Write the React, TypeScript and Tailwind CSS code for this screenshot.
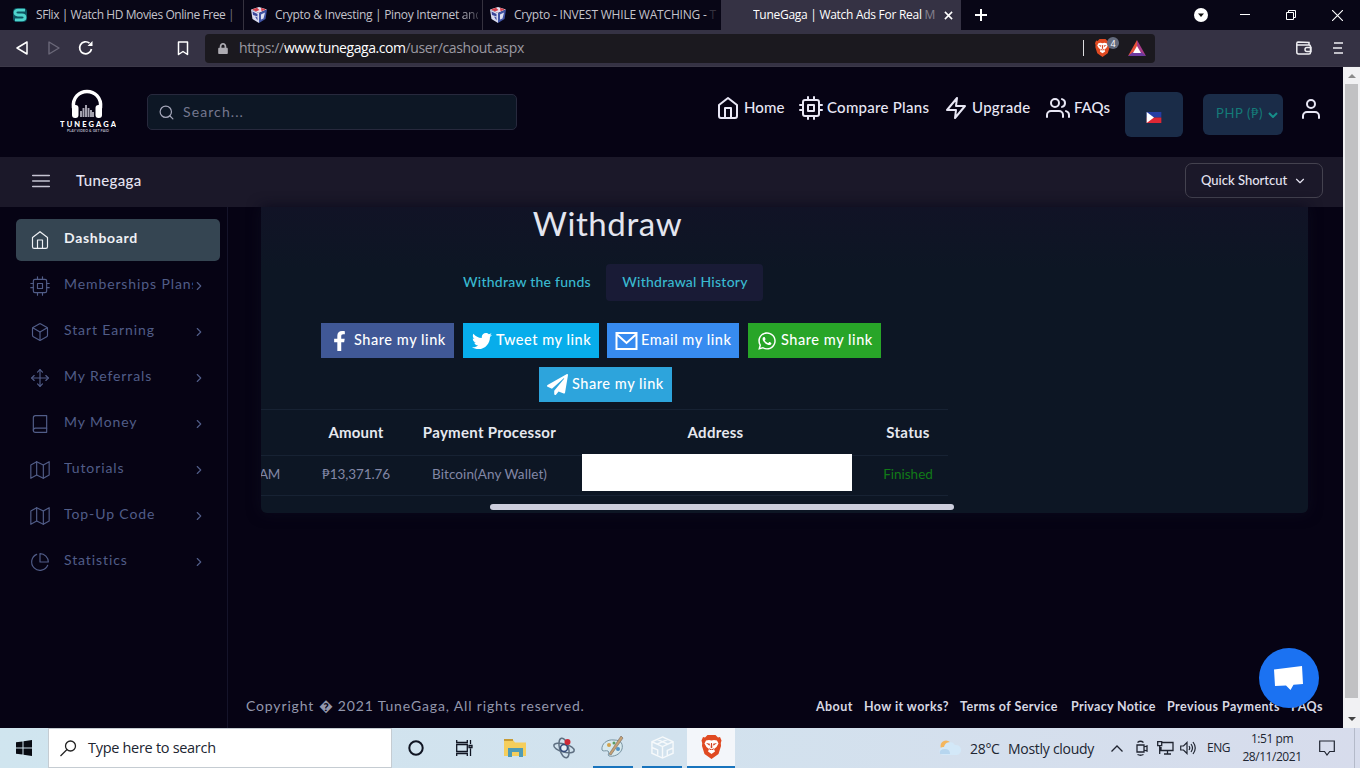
import type { ReactNode } from "react";
import {
    FiHome, FiCpu, FiZap, FiUsers, FiUser, FiBox, FiMove, FiBook, FiMap, FiPieChart,
    FiSearch, FiMenu, FiChevronRight, FiChevronDown,
} from "react-icons/fi";
import { FaFacebookF, FaTwitter, FaWhatsapp, FaPaperPlane, FaLock } from "react-icons/fa";

const menu = [
    { icon: FiCpu, label: "Memberships Plans" },
    { icon: FiBox, label: "Start Earning" },
    { icon: FiMove, label: "My Referrals" },
    { icon: FiBook, label: "My Money" },
    { icon: FiMap, label: "Tutorials" },
    { icon: FiMap, label: "Top-Up Code" },
    { icon: FiPieChart, label: "Statistics" },
];

export default function App() {
    return (
        <div className="flex h-[768px] w-[1360px] flex-col overflow-hidden bg-[#060314] whitespace-nowrap font-['Lato',sans-serif]">
            <TabStrip />
            <Toolbar />
            <div className="flex h-[661px]">
                <div className="relative flex w-[1343px] flex-col">
                    <Header />
                    <SubHeader />
                    <div className="flex flex-1">
                        <Sidebar />
                        <main className="flex flex-1 flex-col">
                            <WithdrawCard />
                            <Footer />
                        </main>
                    </div>
                    <ChatButton />
                </div>
                <Scrollbar />
            </div>
            <Taskbar />
        </div>
    );
}

/* Browser */

function TabStrip() {
    return (
        <div className="flex h-[30px] bg-[#080616] font-['Open_Sans',sans-serif] text-[12px] text-[#c4c3cb]">
            <div className="flex w-[244px] items-center border-r border-[#35323f] pl-[12px]">
                <svg viewBox="0 0 16 16" className="mr-[8px] h-4 w-4">
                    <rect x="1" y="1" width="14" height="14" rx="4" fill="#0d5360" />
                    <path d="M13 3.2H6Q3 3.2 3 5.5T6 8h4q3 0 3 2.4T10 12.8H3" fill="none" stroke="#4fd5cd" strokeWidth="2.8" />
                </svg>
                <span className="w-[203px] overflow-hidden tracking-[-0.42px]">SFlix | Watch HD Movies Online Free <span className="text-[#77747f]">|</span></span>
            </div>
            <div className="flex w-[239px] items-center border-r border-[#35323f] pl-[7px]">
                <CubeLogo />
                <span className="w-[203px] overflow-hidden tracking-[-0.3px]">Crypto &amp; Investing | Pinoy Internet <span className="bg-linear-to-r from-[#c4c3cb] to-[#24222f] bg-clip-text text-transparent">and</span></span>
            </div>
            <div className="flex w-[238px] items-center pl-[7px]">
                <CubeLogo />
                <span className="w-[206px] overflow-hidden tracking-[-0.2px]">Crypto - INVEST WHILE WATCHING - <span className="text-[#35323f]">T</span></span>
            </div>
            <div className="flex w-[240px] items-center bg-[#353244] pl-[32px] font-medium text-white">
                <span className="w-[183px] overflow-hidden tracking-[-0.28px]">TuneGaga | Watch Ads For Real <span className="text-[#85828f]">M</span></span>
                <svg viewBox="0 0 10 10" className="ml-[8px] h-[9px] w-[9px]" stroke="white" strokeWidth="1.7"><path d="M1 1l8 8M9 1L1 9" /></svg>
            </div>
            <div className="flex flex-1 items-center">
                <svg viewBox="0 0 12 12" className="ml-[14px] h-3 w-3" stroke="white" strokeWidth="2"><path d="M6 0v12M0 6h12" /></svg>
                <svg viewBox="0 0 14 14" className="ml-[207px] h-[14px] w-[14px]"><circle cx="7" cy="7" r="7" fill="#fff" /><path d="M4 5.5h6L7 9z" fill="#111" /></svg>
                <svg viewBox="0 0 10 10" className="ml-[32px] h-[10px] w-[10px]" stroke="white"><path d="M0 4.5h10" /></svg>
                <svg viewBox="0 0 10 10" className="ml-[36px] h-[10px] w-[10px]" stroke="white" fill="none"><path d="M.5 2.5h7v7h-7zM2.5 2.5v-2h7v7h-2" /></svg>
                <svg viewBox="0 0 10 10" className="ml-[36px] h-[11px] w-[11px]" stroke="white"><path d="M0 0l10 10M10 0L0 10" /></svg>
            </div>
        </div>
    );
}

function CubeLogo() {
    return (
        <svg viewBox="0 0 16 16" className="mr-[8px] h-4 w-4">
            <path d="M0 2.5L8 0l8 2.5L8 6z" fill="#e8dff0" />
            <path d="M0 2.5L8 6v10L1.5 12z" fill="#d9dcf0" />
            <path d="M16 2.5L8 6v10l6.5-4z" fill="#4154a5" />
            <path d="M1.5 4.5L6.5 7v2.5L2 8zM4 9.5l2.5 1v3z" fill="#3c489a" />
            <path d="M1 2.5L6 .8 8.500 3 5 4.500z" fill="#d6404b" />
            <path d="M10 .8l5 1.700L10.500 4.200z" fill="#d6404b" />
            <path d="M10 7.5l4-2-1.5 6-2.5 1z" fill="#dee1f2" />
        </svg>
    );
}

function Toolbar() {
    return (
        <div className="flex h-[37px] items-center border-b border-[#3c3949] bg-[#353244] font-['Open_Sans',sans-serif]">
            <svg viewBox="0 0 12 14" className="ml-[16px] h-[14px] w-[12px]" fill="none" stroke="white" strokeWidth="1.5" strokeLinejoin="round"><path d="M11 1v12L1 7z" /></svg>
            <svg viewBox="0 0 12 14" className="ml-[20px] h-[14px] w-[12px]" fill="none" stroke="#6b6879" strokeWidth="1.4" strokeLinejoin="round"><path d="M1 1v12l10-6z" /></svg>
            <svg viewBox="0 0 16 16" className="ml-[18px] h-4 w-4" fill="none" stroke="white" strokeWidth="1.7"><path d="M13.5 9A6 6 0 1 1 11.5 3.2" /><path d="M9.5 6h5V1z" fill="white" stroke="none" /></svg>
            <svg viewBox="0 0 12 15" className="ml-[83px] h-[15px] w-[12px]" fill="none" stroke="white" strokeWidth="1.5" strokeLinejoin="round"><path d="M1.5 1h9v12.5L6 10.5l-4.5 3z" /></svg>
            <div className="ml-[16px] flex h-[29px] w-[950px] items-center rounded-[4px] bg-[#1b191f] pl-[13px]">
                <FaLock className="h-[11px] w-[10px] text-[#adabb2]" />
                <span className="ml-[11px] w-[300px] pb-px text-[14px] tracking-[-0.36px] text-[#9b99a2]">
                    https://<span className="font-medium tracking-[-0.45px] text-white">www.tunegaga.com</span>/user/cashout.aspx
                </span>
                <div className="ml-[544px] h-4 w-px bg-[#dcdcdf]" />
                <div className="relative ml-[11px] h-[18px] w-[26px]">
                    <BraveLion className="h-[18px] w-[15px]" />
                    <span className="absolute top-[-2px] left-[12px] flex h-[12px] w-[12px] items-center justify-center rounded-full bg-[#646b7d] text-[9px] leading-none text-white">4</span>
                </div>
                <svg viewBox="0 0 18 16" className="ml-[7px] h-[16px] w-[18px]">
                    <path d="M9 0L0 16l9-5z" fill="#e6513a" />
                    <path d="M9 0l9 16-9-5z" fill="#a73b88" />
                    <path d="M0 16h18l-5-4H5z" fill="#6c3aa0" />
                    <path d="M9 6l-4 7h8z" fill="white" />
                </svg>
            </div>
            <svg viewBox="0 0 16 14" className="ml-[141px] h-[14px] w-[16px]" fill="none" stroke="#eeeef2" strokeWidth="1.5"><path d="M13 4V1.5L2 1Q.8 1 .8 2.5V11Q.8 13 2.5 13H13q1.5 0 1.5-1.5V5.5Q14.5 4 13 4H1.5M15 6.5h-4a2 2 0 0 0 0 4h4z" /></svg>
            <svg viewBox="0 0 10 12" className="ml-[21px] h-[12px] w-[10px]" stroke="#eeeef2" strokeWidth="1.6"><path d="M1 1h9M0 6h9M1 11h9" /></svg>
        </div>
    );
}

function BraveLion({ className }: { className: string }) {
    return (
        <svg viewBox="0 0 20 24" className={className}>
            <path d="M6 0h8l2.5 2.5L18.5 2 20 5.5l-.7 2.5.2 3-2.5 8L10 24l-7-5-2.5-8 .2-3L0 5.500 1.500 2l2 .5z" fill="#e04a22" />
            <path d="M4.5 5.5l3-.5 2.5.6 2.5-.6 3 .5 1.5 3-2 3.5-2.5 2 1 2.5L10 19l-3.5-2.5 1-2.5L5 12 3 8.500z" fill="#fff" />
            <path d="M4.5 8l4 .8-.5 2zM15.5 8l-4 .8.5 2zM9.500 8h1l.4 4.500-.9.700-.9-.700zM7.500 13l2.500 1.400 2.500-1.400-.8 2h-3.400z" fill="#d44322" />
        </svg>
    );
}

function Scrollbar() {
    return (
        <div className="flex w-[17px] flex-col items-center bg-[#f1f1f3]">
            <div className="flex h-[17px] items-center"><svg viewBox="0 0 8 4" className="h-1 w-2" fill="#8b8b8b"><path d="M0 4l4-4 4 4z" /></svg></div>
            <div className="h-[614px] w-[13px] bg-[#c1c1c3]" />
            <div className="mt-[12px] flex h-[17px] items-center"><svg viewBox="0 0 8 4" className="h-1 w-2" fill="#444"><path d="M0 0l4 4 4-4z" /></svg></div>
        </div>
    );
}

/* Site */

function Header() {
    return (
        <header className="flex h-[90px] items-start text-[15px] text-[#e8e7f5]">
            <Logo />
            <div className="mt-[27px] ml-[31px] flex h-[36px] w-[370px] items-center rounded-[5px] border border-[#27293d] bg-[#0d1725] pl-[10px] text-[#75788f]">
                <FiSearch className="h-[17px] w-[17px] text-[#a5a7ba]" strokeWidth={1.7} />
                <span className="ml-[8px] pb-px text-[14px] tracking-[1.1px]">Search...</span>
            </div>
            <nav className="mt-[29px] ml-[199px] flex h-[26px] font-medium">
                <NavLink icon={<FiHome className="h-6 w-6" />} label="Home" className="w-[83px] tracking-[0.1px]" />
                <NavLink icon={<FiCpu className="h-6 w-6" />} label="Compare Plans" className="w-[145px] tracking-[0.27px]" />
                <NavLink icon={<FiZap className="h-6 w-6" />} label="Upgrade" className="w-[102px] tracking-[0.3px]" />
                <NavLink icon={<FiUsers className="h-6 w-6" />} label="FAQs" className="w-[79px] tracking-[0px]" />
            </nav>
            <div className="mt-[25px] flex h-[45px] w-[58px] items-center justify-center rounded-[6px] bg-[#1a2c48] pt-[6px]">
                <svg viewBox="0 0 16 12" className="h-[11px] w-[16px]">
                    <path d="M0 0h16v6H0z" fill="#263ea4" /><path d="M0 6h16v6H0z" fill="#df2734" /><path d="M0 0l8 6-8 6z" fill="#fff" />
                </svg>
            </div>
            <div className="mt-[27px] ml-[20px] flex h-[41px] w-[80px] items-center rounded-[6px] bg-[#1a2c48] pl-[13px] text-[13px] tracking-[0.6px] text-[#147b78]">
                <span className="w-[52px] pb-px">PHP (₱)</span>
                <svg viewBox="0 0 10 6" className="h-[6px] w-[10px]" fill="none" stroke="#168e89" strokeWidth="2"><path d="M1 1l4 4 4-4" /></svg>
            </div>
            <FiUser className="mt-[30px] ml-[16px] h-6 w-6" />
        </header>
    );
}

function NavLink({ icon, label, className }: { icon: ReactNode, label: string, className: string }) {
    return (
        <a className={`flex items-start gap-[4px] ${className}`}>
            {icon}
            <span className="leading-[22px]">{label}</span>
        </a>
    );
}

function Logo() {
    return (
        <svg viewBox="0 0 56 44" className="mt-[22px] ml-[60px] h-[44px] w-[56px]">
            <path d="M13.5 19C11-3 43-3 40.5 19" fill="none" stroke="#fff" strokeWidth="3.5" />
            <rect x="12" y="16" width="6.5" height="13" rx="3" fill="#fff" />
            <rect x="35.5" y="16" width="6.5" height="13" rx="3" fill="#fff" />
            <path d="M21 28v-6M23.5 28v-9M26 28V16M28.5 28V19M31 28v-7M33 28v-5" stroke="#aaa8b5" strokeWidth="1.9" />
            <text x="0" y="37.5" textLength="56" fontSize="7.5" fontWeight="900" fill="#fff">TUNEGAGA</text>
            <text x="7" y="42.5" textLength="42" fontSize="3.5" fontWeight="700" fill="#b6b4c1">PLAY VIDEO &amp; GET PAID</text>
        </svg>
    );
}

function SubHeader() {
    return (
        <div className="flex h-[50px] items-center bg-[#1b1829] pb-[4px] text-[#e5e3f1]">
            <FiMenu className="ml-[30px] h-[22px] w-[22px] translate-y-[1px] text-[#c5c3d2]" strokeWidth={1.8} />
            <span className="ml-[24px] text-[15px] font-medium tracking-[0.35px]">Tunegaga</span>
            <div className="ml-auto mr-[20px] flex h-[35px] w-[138px] items-center rounded-[7px] border border-[#44424f] pl-[15px] text-[13px] font-medium">
                <span className="w-[92px] pt-px">Quick Shortcut</span>
                <FiChevronDown className="h-[14px] w-[14px] translate-y-[1px]" />
            </div>
        </div>
    );
}

function Sidebar() {
    return (
        <aside className="flex w-[228px] flex-col gap-[4px] border-r border-[#15142a] pt-[12px] pl-[16px] text-[14px] text-[#515d88]">
            <div className="flex h-[42px] w-[204px] items-center rounded-[5px] bg-[#354552] pl-[14px] font-bold text-[#eff1f5]">
                <FiHome className="h-5 w-5" strokeWidth={1.4} />
                <span className="ml-[14px] pb-[5px] tracking-[0.7px]">Dashboard</span>
            </div>
            {menu.map(({ icon: Icon, label }) => (
                <div key={label} className="flex h-[42px] w-[204px] items-center pl-[14px]">
                    <Icon className="h-5 w-5" strokeWidth={1.4} />
                    <span className="ml-[14px] w-[129px] overflow-hidden pb-[5px] tracking-[0.9px]">{label}</span>
                    <FiChevronRight className="-ml-px h-[14px] w-[14px]" strokeWidth={1.9} />
                </div>
            ))}
        </aside>
    );
}

function WithdrawCard() {
    return (
        <section className="ml-[33px] h-[306px] w-[1047px] overflow-hidden rounded-b-[6px] bg-[#0d1624] bg-linear-to-b from-[#111326] to-[#0d1624] to-20% shadow-[0_0_14px_#0b0a1c]">
            <div className="flex w-[693px] flex-col">
                <h1 className="mt-[-4px] text-center text-[33px] leading-[41px] tracking-[0.6px] text-[#e3e5ef]">Withdraw</h1>
                <div className="mt-[20px] ml-[186px] flex h-[37px] text-[14px] font-medium text-[#39b9d0]">
                    <span className="flex w-[159px] items-center pb-[2px] pl-[16px] tracking-[0.25px]">Withdraw the funds</span>
                    <span className="flex w-[157px] items-center justify-center rounded-[4px] bg-[#191b36] pb-[2px] pl-px tracking-[0.25px]">Withdrawal History</span>
                </div>
                <div className="mt-[22px] ml-[60px] flex h-[35px]">
                    <ShareButton className="w-[133px] bg-[#405896]" icon={<FaFacebookF className="mr-[5px] ml-[9px] h-[20px] w-[19px]" />} label="Share my link" />
                    <ShareButton className="ml-[9px] w-[136px] bg-[#07adeb]" icon={<FaTwitter className="mr-[4px] ml-[9px] h-[20px] w-[20px]" />} label="Tweet my link" />
                    <ShareButton
                        className="ml-[8px] w-[132px] bg-[#378bf0]"
                        icon={<svg viewBox="0 0 22 20" className="mr-[3px] ml-[8px] h-[20px] w-[23px]" fill="none" stroke="white" strokeWidth="2"><path d="M1 2h20v16H1zM1 3l10 9L21 3" /></svg>}
                        label="Email my link"
                    />
                    <ShareButton className="ml-[9px] w-[133px] bg-[#28a528]" icon={<FaWhatsapp className="mr-[4px] ml-[9px] h-[20px] w-[20px]" />} label="Share my link" />
                </div>
                <ShareButton className="mt-[9px] ml-[278px] h-[35px] w-[133px] bg-[#2da4dc]" icon={<FaPaperPlane className="mr-[4px] ml-[8px] h-[21px] w-[21px]" />} label="Share my link" />
                <div className="mt-[7px] w-[687px] text-center text-[15px]">
                    <div className="flex h-[46px] items-center border-t border-[#172233] font-bold text-[#e6e8ef]">
                        <span className="w-[45px] shrink-0" />
                        <span className="w-[100px] shrink-0 tracking-[0.2px]">Amount</span>
                        <span className="w-[167px] shrink-0 tracking-[0.3px]">Payment Processor</span>
                        <span className="w-[285px] shrink-0 tracking-[0.3px]">Address</span>
                        <span className="w-[100px] shrink-0 tracking-[0.3px]">Status</span>
                    </div>
                    <div className="flex h-[41px] items-center border-y border-[#172233] pb-[3px] text-[13.5px] text-[#8287a6]">
                        <span className="-ml-[2px] w-[47px] shrink-0 text-left tracking-[-0.3px]">AM</span>
                        <span className="w-[100px] shrink-0 tracking-[-0.1px]">₱13,371.76</span>
                        <span className="w-[167px] shrink-0 tracking-[0.1px]">Bitcoin(Any Wallet)</span>
                        <span className="mx-[9px] h-[37px] w-[270px] shrink-0 -translate-y-[2px] bg-white" />
                        <span className="w-[94px] shrink-0 text-[#117a17]">Finished</span>
                    </div>
                </div>
                <div className="mt-[8px] ml-[229px] h-[6px] w-[464px] rounded-full bg-[#cdcedd]" />
            </div>
        </section>
    );
}

function ShareButton({ className, icon, label }: { className: string, icon: ReactNode, label: string }) {
    return (
        <div className={`flex items-center text-[14.5px] font-medium tracking-[0.55px] text-white ${className}`}>
            {icon}
            <span className="pb-[2px]">{label}</span>
        </div>
    );
}

function Footer() {
    return (
        <footer className="mt-[183px] flex h-[22px] items-center pl-[18px] text-[#9397ac]">
            <span className="w-[570px] pb-[3px] text-[14px] tracking-[0.85px]">Copyright � 2021 TuneGaga, All rights reserved.</span>
            <div className="flex text-[12.5px] font-bold tracking-[0.42px] text-[#d7d8e3]">
                <span className="w-[48px]">About</span>
                <span className="w-[96px]">How it works?</span>
                <span className="w-[111px]">Terms of Service</span>
                <span className="w-[96px] tracking-[0.3px]">Privacy Notice</span>
                <span className="w-[124px]">Previous Payments</span>
                <span>FAQs</span>
            </div>
        </footer>
    );
}

function ChatButton() {
    return (
        <div className="absolute top-[581px] left-[1259px] flex h-[60px] w-[60px] items-center justify-center rounded-full bg-[#1b72f2] pr-[2px]">
            <svg viewBox="0 0 29 25" className="h-[25px] w-[29px]" fill="white"><path d="M0 3.5L28 0l1 18-9.5.8-3 5.2-4.5-4.5L1 20z" /></svg>
        </div>
    );
}

/* Windows taskbar */

function Taskbar() {
    return (
        <div className="flex h-[40px] items-center bg-linear-to-r from-[#d0e5ef] via-[#d2e2ee] to-[#d7dcec] font-['Open_Sans',sans-serif] text-[#202531]">
            <svg viewBox="0 0 16 16" className="mr-[16px] ml-[16px] h-4 w-4" fill="#080b12"><path d="M0 2.3L6.5 1.4v6H0zM7.5 1.2L16 0v7.4H7.5zM0 8.5h6.5v6.1L0 13.7zM7.5 8.5H16V16l-8.5-1.2z" /></svg>
            <div className="flex h-full w-[344px] items-center border border-[#c5ccd2] bg-white pl-[11px]">
                <svg viewBox="0 0 17 17" className="h-[17px] w-[17px]" fill="none" stroke="#222" strokeWidth="1.3"><circle cx="10.5" cy="6" r="5" /><path d="M7 9.5L.5 16" /></svg>
                <span className="ml-[11px] text-[14.5px] tracking-[-0.3px]">Type here to search</span>
            </div>
            <svg viewBox="0 0 16 16" className="ml-[16px] h-4 w-4" fill="none" stroke="#101522" strokeWidth="2"><circle cx="8" cy="8" r="6.7" /></svg>
            <svg viewBox="0 0 17 16" className="ml-[32px] h-4 w-[17px]" fill="none" stroke="#101522" strokeWidth="1.3"><path d="M.7 4.5h10.6v7H.7zM.7 0v2.5h10.6V0M.7 16v-2.5h10.6V16M14.5 0v4M14.5 8.5V16M13 5.5h3v2h-3z" /></svg>
            <svg viewBox="0 0 22 20" className="ml-[31px] h-[20px] w-[22px]">
                <path d="M0 2h9l2 2.5H22V18H0z" fill="#f5ce5c" /><path d="M0 1h9v2H0z" fill="#c79b35" /><path d="M4 10h15v9h-4v-5H8v5H4z" fill="#4f9bb5" />
            </svg>
            <svg viewBox="0 0 24 24" className="ml-[26px] h-6 w-6" fill="none" stroke="#5f7082" strokeWidth="1.5">
                <ellipse cx="12" cy="12" rx="10.5" ry="4" transform="rotate(15 12 12)" /><ellipse cx="12" cy="12" rx="10" ry="4.5" transform="rotate(75 12 12)" /><circle cx="12" cy="12" r="3.5" fill="#e6eef6" stroke="#334a78" />
                <circle cx="15.5" cy="6" r="3" fill="#cf2937" stroke="none" />
            </svg>
            <div className="ml-[17px] flex h-full w-[40px] items-center justify-center border-b-2 border-[#1874bd]">
                <svg viewBox="0 0 24 24" className="h-6 w-6">
                    <path d="M1 15C0 9 6 4 13 5c8 0 9 5 8 9-2 6-9 8-13 7-2-1 1-4-1-5s-5 1-6-1z" fill="#d7e9ee" stroke="#7893a1" />
                    <circle cx="8" cy="10" r="2" fill="#d3a34b" /><circle cx="13" cy="8" r="1.5" fill="#5b9d62" /><circle cx="17" cy="14" r="2" fill="#4f92c4" />
                    <path d="M8 19L20 1l2 2-12 17z" fill="#c8a273" stroke="#80746c" strokeWidth=".7" />
                </svg>
            </div>
            <div className="ml-[9px] flex h-full w-[40px] items-center justify-center border-b-2 border-[#1874bd]">
                <svg viewBox="0 0 26 26" className="h-[25px] w-[25px]" fill="none" stroke="#f6f9fb" strokeWidth="1.5"><path d="M13 2l11 5v12l-11 5-11-5V7zM2 7l11 5 11-5M13 12v12M7.5 4.5l11 5M18.5 4.5l-11 5M2 13l6 2.5v5M18 21v-5l6-2.5" /></svg>
            </div>
            <div className="ml-[5px] flex h-full w-[48px] items-center justify-center border-b-2 border-[#1874bd] bg-[#f3f6fa]">
                <BraveLion className="h-6 w-[21px]" />
            </div>
            <svg viewBox="0 0 24 16" className="ml-[203px] h-[18px] w-[24px]">
                <circle cx="8" cy="6" r="5.5" fill="#f4b65e" /><path d="M5 15a4 4 0 0 1 1-8 6 6 0 0 1 11-2 5 5 0 0 1 2 10z" fill="#d3e8f8" /><path d="M2 14q-1-5 5-5 5 0 5 5z" fill="#b7d6ef" />
            </svg>
            <span className="ml-[8px] w-[38px] text-[14px] tracking-[-0.3px]">28°C</span>
            <span className="w-[103px] text-[14px] tracking-[-0.28px]">Mostly cloudy</span>
            <svg viewBox="0 0 12 7" className="h-[7px] w-[12px]" fill="none" stroke="#202531" strokeWidth="1.3"><path d="M.5 6.5L6 1l5.5 5.5" /></svg>
            <svg viewBox="0 0 12 16" className="ml-[13px] h-4 w-[12px]" fill="none" stroke="#202531" strokeWidth="1.3"><path d="M1 5h7v7H1zM8 7l3-1v5L8 10M1.5 2.5q3-2.5 6 0M1.5 14.5q3 1.5 6 0" /></svg>
            <svg viewBox="0 0 17 14" className="ml-[9px] h-[14px] w-[17px]" fill="none" stroke="#202531" strokeWidth="1.3"><path d="M5 1.5h11v8H4V6M.7.7h4v4h-4zM2.7 5v8M7 13h7M10.5 10v3" /></svg>
            <svg viewBox="0 0 16 14" className="ml-[6px] h-[14px] w-4" fill="none" stroke="#202531" strokeWidth="1.2"><path d="M.7 5h2.8L7 1.5v11L3.5 9H.7zM9 5q1.5 2 0 4M11 3q3 4 0 8M13 1q4.5 6 0 12" /></svg>
            <span className="ml-[11px] w-[35px] text-[12px] tracking-[-0.5px]">ENG</span>
            <div className="w-[60px] text-center text-[12px] leading-[18px] tracking-[-0.45px]">
                <div>1:51 pm</div>
                <div>28/11/2021</div>
            </div>
            <svg viewBox="0 0 16 16" className="ml-[17px] h-4 w-4" fill="none" stroke="#202531" strokeWidth="1.2"><path d="M.7 1h14.6v10.5h-4.6L8 15l-2.5-3.5H.7z" /></svg>
            <div className="ml-[19px] h-full w-px bg-[#b4bac9]" />
        </div>
    );
}
